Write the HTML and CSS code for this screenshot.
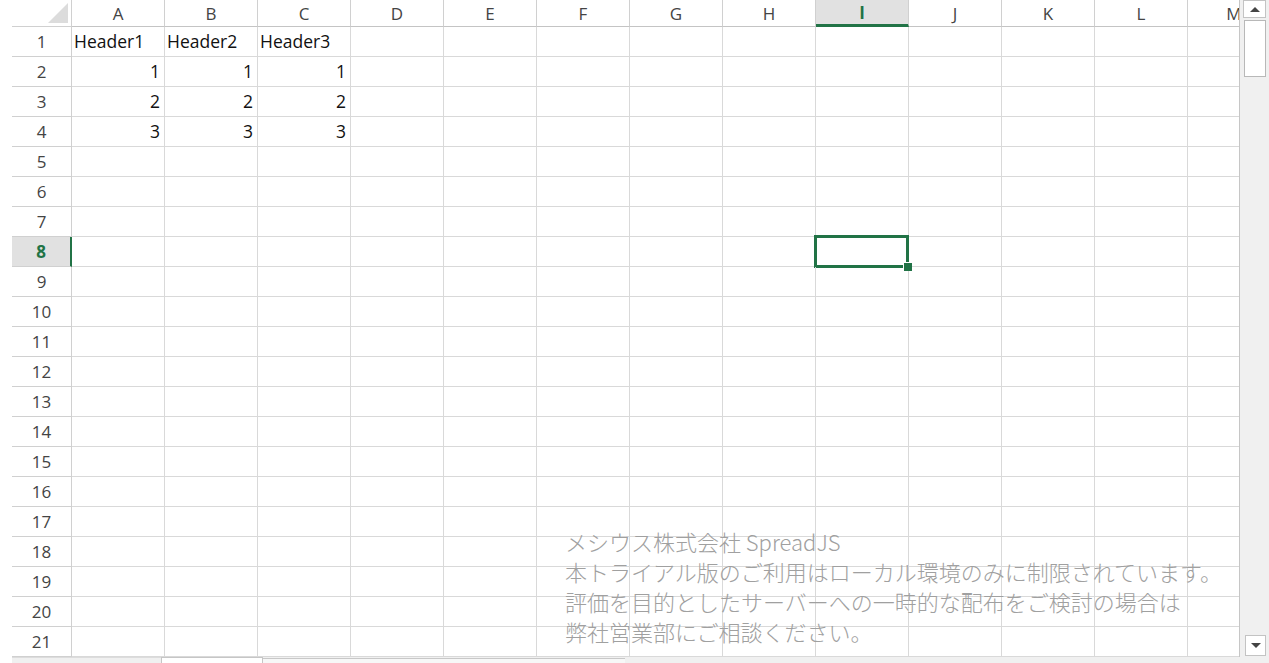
FILE: index.html
```html
<!DOCTYPE html>
<html lang="ja">
	<head>
		<meta charset="UTF-8">
		<title>SpreadJS</title>
		<link rel="stylesheet" href="styles.css">
	</head>
	<body>
		<div class="book">
			<div class="sheet">
				<div class="grid" id="grid"></div>
				<div class="watermark">
					<p>メシウス株式会社 SpreadJS</p>
					<p>本トライアル版のご利用はローカル環境のみに制限されています。</p>
					<p>評価を目的としたサーバーへの一時的な配布をご検討の場合は</p>
					<p>弊社営業部にご相談ください。</p>
				</div>
			</div>
			<div class="vscroll">
				<div class="arrow up"></div>
				<div class="thumb"></div>
				<div class="arrow down"></div>
			</div>
		</div>
		<div class="tabstrip">
			<div class="tabnav"></div>
			<div class="tab"></div>
			<div class="hscroll"><div class="hthumb"></div></div>
		</div>
		<script type="text/javascript">
			var cols="ABCDEFGHIJKLM".split("");
			var data=[["Header1","Header2","Header3"],[1,1,1],[2,2,2],[3,3,3]];
			var grid=document.getElementById("grid");
			var html='<div class="corner"></div>';
			for(var j=0;j<cols.length;j++){
				html+='<div class="colhead'+(cols[j]=="I"?" active":"")+'">'+cols[j]+'</div>';
			}
			for(var r=1;r<=21;r++){
				html+='<div class="rowhead'+(r==8?" active":"")+'">'+r+'</div>';
				for(var c=0;c<cols.length;c++){
					var v=data[r-1]?data[r-1][c]:undefined;
					var cls="cell";
					if(typeof v=="number") cls+=" num";
					if(r==8&&cols[c]=="I") cls+=" selected";
					html+='<div class="'+cls+'">'+(v===undefined?"":v)+'</div>';
				}
			}
			grid.innerHTML=html;
		</script>
	</body>
</html>
```

FILE: styles.css
```css
*{
	margin: 0;
	padding: 0;
	box-sizing: border-box;
}
body{
	width: 1269px;
	height: 663px;
	overflow: hidden;
	background: #fff;
	font-family: "Open Sans", "Noto Sans", sans-serif;
}
.book{
	display: flex;
	height: 657px;
}
.sheet{
	position: relative;
	width: 1240px;
	padding-left: 12px;
	overflow: hidden;
	border-right: 1px solid #c6c6c6;
}
.grid{
	display: grid;
	grid-template-columns: 60px repeat(13, 93px);
	grid-template-rows: 27px repeat(21, 30px);
}
.corner, .colhead, .rowhead{
	color: #444;
	font-size: 17px;
	border-right: 1px solid #d0d0d0;
	border-bottom: 1px solid #d0d0d0;
	display: flex;
	align-items: center;
	justify-content: center;
}
.corner{
	align-items: flex-end;
	justify-content: flex-end;
	padding: 0 3px 3px 0;
}
.corner::after{
	content: "";
	border-left: 20px solid transparent;
	border-bottom: 20px solid #dcdcdc;
}
.colhead{
	border-bottom-color: #c4c4c4;
}
.colhead.active{
	background: #e1e1e1;
	color: #217346;
	font-weight: bold;
	border-bottom: 3px solid #217346;
}
.rowhead.active{
	background: #e1e1e1;
	color: #217346;
	font-weight: bold;
	border-right: 2px solid #217346;
}
.cell{
	position: relative;
	border-right: 1px solid #d9d9d9;
	border-bottom: 1px solid #d9d9d9;
	font-size: 17.5px;
	color: #111;
	display: flex;
	align-items: flex-end;
	padding: 0 4px 3px 2px;
	white-space: nowrap;
}
.cell.num{
	justify-content: flex-end;
}
.cell.selected::after{
	content: "";
	position: absolute;
	left: -2px;
	top: -2px;
	right: -1px;
	bottom: -2px;
	border: 3px solid #217346;
}
.cell.selected::before{
	content: "";
	position: absolute;
	right: -4px;
	bottom: -5px;
	width: 8px;
	height: 8px;
	background: #217346;
	box-shadow: -1px -1px 0 #fff;
	z-index: 1;
}
.watermark{
	position: absolute;
	left: 565px;
	top: 526px;
	font-family: "Noto Sans CJK JP", sans-serif;
	font-size: 22px;
	font-weight: 300;
	line-height: 30px;
	color: #a0a0a0;
	white-space: nowrap;
}
.vscroll{
	width: 29px;
	background: #f0f0f0;
	display: flex;
	flex-direction: column;
	padding: 0 3px 0 3px;
}
.arrow{
	background: #fff;
	border: 1px solid #c3c3c3;
	display: flex;
	align-items: center;
	justify-content: center;
}
.arrow::after{
	content: "";
	border-left: 5px solid transparent;
	border-right: 5px solid transparent;
}
.arrow.up{
	height: 18px;
}
.arrow.up::after{
	border-bottom: 5px solid #444;
}
.arrow.down{
	margin: auto 0 1px 2px;
	height: 21px;
}
.arrow.down::after{
	border-top: 5px solid #444;
}
.thumb{
	margin: 2px 0 0 1px;
	height: 57px;
	background: #fff;
	border: 1px solid #b8b8b8;
}
.tabstrip{
	display: flex;
	height: 6px;
	margin-left: 12px;
	background: #f0f0f0;
}
.tabnav{
	width: 149px;
	border-top: 1px solid #dcdcdc;
}
.tab{
	width: 102px;
	background: #fff;
	border: 1px solid #c6c6c6;
	border-bottom: none;
}
.hscroll{
	flex: 1;
	padding-top: 1px;
}
.hthumb{
	width: 362px;
	height: 100%;
	border-top: 1px solid #c8c8c8;
	background: #f7f7f7;
}
```
